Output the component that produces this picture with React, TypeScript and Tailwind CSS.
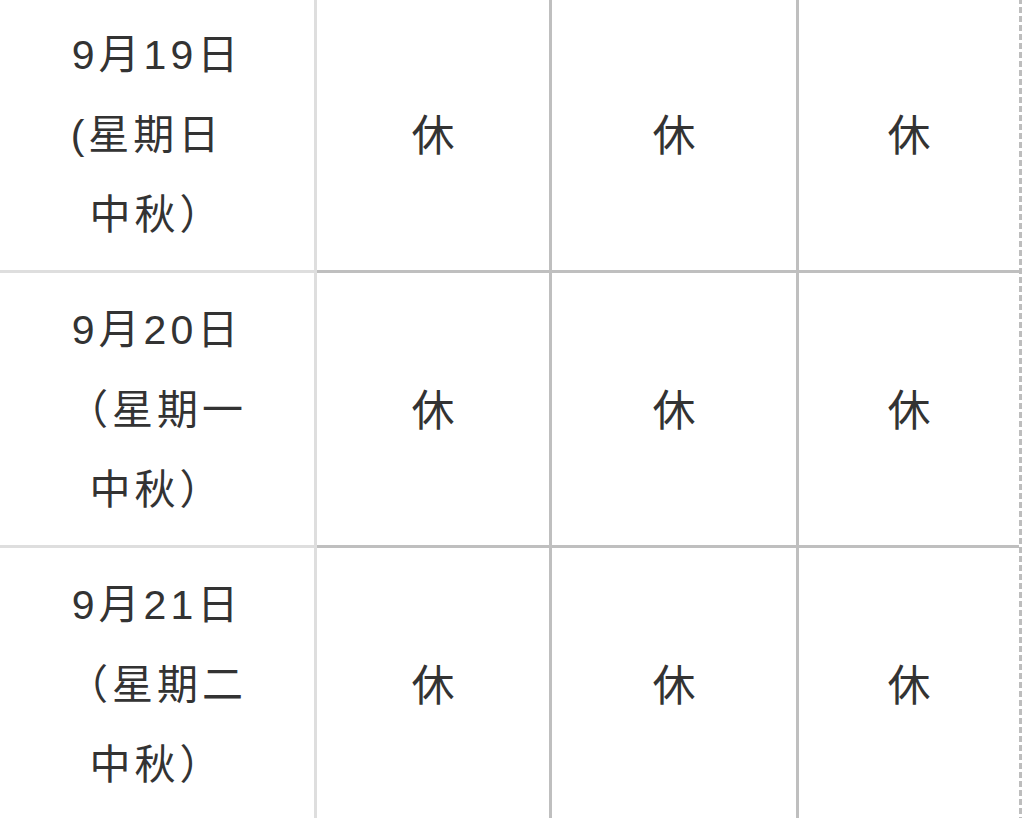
import React from 'react';

interface Row {
  lines: string[];
  shift?: boolean;
}

const rows: Row[] = [
  { lines: ['9月19日', '(星期日', '中秋）'], shift: true },
  { lines: ['9月20日', '（星期一', '中秋）'] },
  { lines: ['9月21日', '（星期二', '中秋）'] },
];

const font = { fontFamily: '"Liberation Sans", "Noto Sans CJK SC", "Noto Sans", sans-serif' };

export default function App() {
  return (
    <div className="w-[1024px] h-[818px] overflow-hidden bg-white text-[#333333]" style={font}>
      <div className="-mt-[2px] w-[1022px] border-r-[3px] border-dashed border-[#bdbdbd]">
        {rows.map((row, i) => (
          <div key={i} className="flex h-[275px]">
            {/* 日期 */}
            <div className="w-[317px] shrink-0 border-r-[3px] border-b-[3px] border-[#dedede] pt-[17px] text-center text-[41px] leading-[80px] tracking-[4px]">
              {row.lines.map((l, j) => (
                <div key={j} className={j === 1 && row.shift ? 'pr-[20px]' : ''}>
                  {l}
                </div>
              ))}
            </div>
            <div className="w-[235px] shrink-0 border-r-[3px] border-b-[3px] border-[#bfbfbf] flex items-center justify-center pt-[4px] text-[43px]">
              休
            </div>
            <div className="w-[247px] shrink-0 border-r-[3px] border-b-[3px] border-[#bfbfbf] flex items-center justify-center pt-[4px] text-[43px]">
              休
            </div>
            <div className="flex-1 border-b-[3px] border-[#bfbfbf] flex items-center justify-center pt-[4px] text-[43px]">
              休
            </div>
          </div>
        ))}
      </div>
    </div>
  );
}
